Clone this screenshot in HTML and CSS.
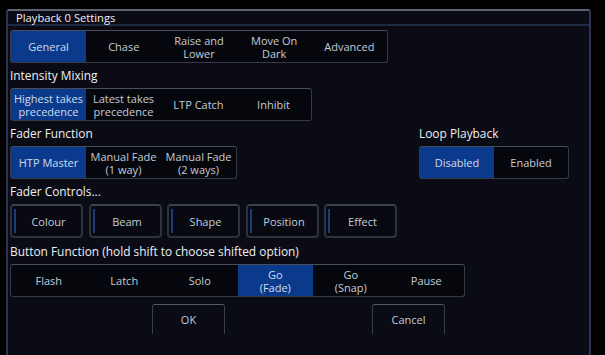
FILE: index.html
```html
<!DOCTYPE html>
<html lang="en">

<head>
    <meta charset="UTF-8">
    <title>Playback 0 Settings</title>
    <link rel="stylesheet" href="styles.css">
</head>

<body>

    <div class="window">
        <div class="titlebar">Playback 0 Settings</div>

        <div class="content">
            <!-- Tabs -->
            <div class="seg tabs">
                <div class="cell selected">General</div>
                <div class="cell">Chase</div>
                <div class="cell">Raise and<br>Lower</div>
                <div class="cell">Move On<br>Dark</div>
                <div class="cell">Advanced</div>
            </div>

            <!-- Intensity Mixing -->
            <div class="label">Intensity Mixing</div>
            <div class="seg">
                <div class="cell selected">Highest takes<br>precedence</div>
                <div class="cell">Latest takes<br>precedence</div>
                <div class="cell">LTP Catch</div>
                <div class="cell">Inhibit</div>
            </div>

            <!-- Fader Function + Loop Playback -->
            <div class="split">
                <div class="group">
                    <div class="label">Fader Function</div>
                    <div class="seg">
                        <div class="cell selected">HTP Master</div>
                        <div class="cell">Manual Fade<br>(1 way)</div>
                        <div class="cell">Manual Fade<br>(2 ways)</div>
                    </div>
                </div>
                <div class="group loop">
                    <div class="label">Loop Playback</div>
                    <div class="seg">
                        <div class="cell selected">Disabled</div>
                        <div class="cell">Enabled</div>
                    </div>
                </div>
            </div>

            <!-- Fader Controls -->
            <div class="label">Fader Controls...</div>
            <div class="controls">
                <div class="ctrl">Colour</div>
                <div class="ctrl">Beam</div>
                <div class="ctrl">Shape</div>
                <div class="ctrl">Position</div>
                <div class="ctrl">Effect</div>
            </div>

            <!-- Button Function -->
            <div class="label">Button Function (hold shift to choose shifted option)</div>
            <div class="seg wide">
                <div class="cell">Flash</div>
                <div class="cell">Latch</div>
                <div class="cell">Solo</div>
                <div class="cell selected">Go<br>(Fade)</div>
                <div class="cell">Go<br>(Snap)</div>
                <div class="cell">Pause</div>
            </div>

            <div class="actions">
                <div class="action">OK</div>
                <div class="action">Cancel</div>
            </div>
        </div>
    </div>

</body>

</html>
```

FILE: styles.css
```css
/* General Styles */
body {
    margin: 0;
    padding: 0;
    background-color: #000;
    font-family: "Open Sans", "Noto Sans", sans-serif;
    color: #e6e8ec;
    overflow: hidden;
}

.window {
    margin: 9px 0 0 6px;
    width: 585px;
    height: 346px;
    background-color: #0a0b14;
    border: 2px solid #2c3550;
    border-top: 2px solid #5c6270;
    border-bottom: none;
    border-radius: 3px 3px 0 0;
    box-sizing: border-box;
}

.titlebar {
    height: 13px;
    line-height: 13px;
    padding-left: 8px;
    font-size: 11.2px;
    color: #f0f0f2;
    border-bottom: 2px solid #1e2a44;
}

.content {
    padding: 4px 0 0 2px;
}

.label {
    padding-top: 3px;
    line-height: 19px;
    font-size: 11.9px;
    color: #eef0f2;
    margin-bottom: 3px;
    white-space: nowrap;
}

/* Segmented boxes */
.seg {
    display: flex;
    width: max-content;
    background-color: #06070c;
    border: 1px solid #363a46;
    border-top-color: #4a4e5a;
    border-radius: 3px;
}

.cell {
    width: 75px;
    height: 31px;
    display: flex;
    align-items: center;
    justify-content: center;
    text-align: center;
    font-size: 11px;
    line-height: 13px;
    color: #c4ccd8;
}

.cell.selected {
    background-color: #0b3a8c;
    color: #d2dcea;
}

.seg.tabs .cell {
    width: 75.2px;
}

.seg.wide .cell {
    width: 75.5px;
}

.split {
    display: flex;
}

.group.loop {
    margin-left: 182px;
}

.group.loop .seg .cell {
    width: 74px;
}

/* Fader control buttons */
.controls {
    display: flex;
    gap: 5.5px;
    margin-top: 1px;
}

.ctrl {
    position: relative;
    width: 73px;
    height: 34px;
    box-sizing: border-box;
    display: flex;
    align-items: center;
    justify-content: center;
    padding-left: 4px;
    font-size: 11px;
    color: #c4ccd8;
    background-color: #090a11;
    border: 2px solid #2e323d;
    border-top-color: #3c404c;
    border-radius: 4px;
}

.ctrl::before {
    content: "";
    position: absolute;
    left: 2px;
    top: 3px;
    bottom: 3px;
    width: 2px;
    background-color: #1d3c7c;
}

.controls + .label {
    margin-top: 1px;
}

/* OK / Cancel */
.actions {
    display: flex;
    margin-top: 7px;
    padding-left: 142px;
    gap: 147px;
}

.action {
    width: 71px;
    height: 29px;
    display: flex;
    align-items: center;
    justify-content: center;
    font-size: 11px;
    color: #c4ccd8;
    border: 1px solid #3a3e4a;
    border-top-color: #55596a;
    border-bottom: none;
    border-radius: 3px 3px 0 0;
}
```
